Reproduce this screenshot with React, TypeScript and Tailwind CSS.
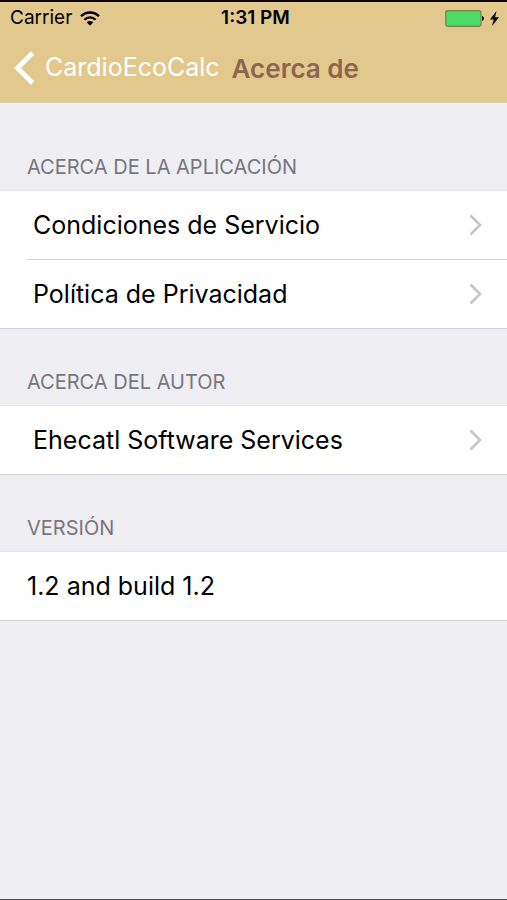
import type { ReactNode } from "react";

type Item = { label: string; href?: string };
type Group = { id: string; title: string; items: Item[] };

const groups: Group[] = [
  {
    id: "app",
    title: "Acerca de la aplicación",
    items: [
      { label: "Condiciones de Servicio", href: "#condiciones" },
      { label: "Política de Privacidad", href: "#privacidad" },
    ],
  },
  {
    id: "autor",
    title: "Acerca del autor",
    items: [{ label: "Ehecatl Software Services", href: "#autor" }],
  },
  {
    id: "version",
    title: "Versión",
    items: [{ label: "1.2 and build 1.2" }],
  },
];

export default function App() {
  return (
    <div className="flex min-h-screen flex-col border-b border-[#48484a] bg-[#efeef3] font-['Inter','Liberation_Sans',sans-serif] text-black">
      <header className="border-t-2 border-b border-t-[#0d0406] border-b-[#d8ceb8] bg-[#e3c88d]">
        <StatusBar />
        <NavBar />
      </header>
      <main className="flex-1 pt-[11px]">
        {groups.map((group) => (
          <Section key={group.id} group={group} />
        ))}
      </main>
    </div>
  );
}

const StatusBar = () => {
  return (
    <div className="grid h-8 grid-cols-3 items-center px-2 text-[19px]">
      <div className="flex items-center gap-2 pl-0.5">
        <span>Carrier</span>
        <WifiIcon />
      </div>
      <span className="pl-1 text-center font-semibold">1:31 PM</span>
      <div className="flex items-center justify-end gap-1.5">
        <BatteryIcon />
        <BoltIcon />
      </div>
    </div>
  );
};

const NavBar = () => {
  return (
    <nav className="flex h-17 items-center gap-3 px-3.5">
      <a href="#inicio" className="flex items-center gap-2.5 text-[25px] text-white">
        <svg width="21" height="34" viewBox="0 0 21 34" fill="none">
          <path d="M18.500 2 3.500 17l15 15" stroke="currentColor" strokeWidth="4.800" />
        </svg>
        CardioEcoCalc
      </a>
      <h1 className="text-[26px] font-semibold text-[#8d6450]">Acerca de</h1>
    </nav>
  );
};

const Section = ({ group }: { group: Group }) => {
  return (
    <section aria-labelledby={group.id}>
      <h2
        id={group.id}
        className="flex h-19 items-end px-[27px] pb-[9px] text-xl leading-7 text-[#77777c] uppercase"
      >
        {group.title}
      </h2>
      <ul className="border-y border-t-[#e6e5ea] border-b-[#d4d3d8] bg-white">
        {group.items.map((item) => (
          <li key={item.label} className="group pl-[27px]">
            <div className="border-b border-[#d4d3d8] group-last:border-b-0">
              {item.href ? (
                <a href={item.href} className="flex h-17 items-center justify-between pr-6 pl-1.5">
                  <Label>{item.label}</Label>
                  <Chevron />
                </a>
              ) : (
                <div className="flex h-17 items-center">
                  <Label>{item.label}</Label>
                </div>
              )}
            </div>
          </li>
        ))}
      </ul>
    </section>
  );
};

const Label = ({ children }: { children: ReactNode }) => {
  return <span className="text-[25px] leading-8">{children}</span>;
};

const Chevron = () => (
  <svg width="14" height="22" viewBox="0 0 14 22" fill="none">
    <path d="m1.500 1.500 9.500 9.500-9.500 9.500" stroke="#c5c5ca" strokeWidth="2.600" />
  </svg>
);

const WifiIcon = () => (
  <svg width="20" height="15" viewBox="0 0 20 15" fill="none">
    <path d="M1 5.200a12.800 12.800 0 0 1 18 0" stroke="currentColor" strokeWidth="2.300" />
    <path d="M4.400 8.700a8 8 0 0 1 11.200 0" stroke="currentColor" strokeWidth="2.300" />
    <path d="M10 14.700 6.700 11.300a4.700 4.700 0 0 1 6.600 0Z" fill="currentColor" />
  </svg>
);

const BatteryIcon = () => (
  <svg width="39" height="17" viewBox="0 0 39 17">
    <rect x="0.700" y="0.700" width="35.300" height="15.600" rx="2.200" fill="#4cd964" stroke="#7d8050" strokeWidth="1.200" />
    <path d="M37 6c1.300.3 2 1.300 2 2.500s-.7 2.200-2 2.500Z" fill="#1d160c" />
  </svg>
);

const BoltIcon = () => (
  <svg width="9" height="15" viewBox="0 0 9 15">
    <path d="M6.500 0 0 8.500h3.800L2 15l7-8.800H5.100Z" fill="currentColor" />
  </svg>
);
